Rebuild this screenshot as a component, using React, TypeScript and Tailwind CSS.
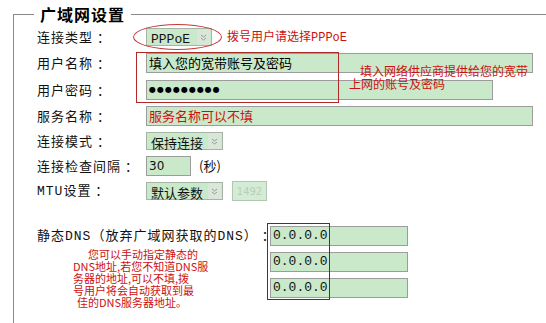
import React from 'react';

const cjk = "font-['Noto_Sans_CJK_SC',sans-serif]";
const mono = "font-['Liberation_Mono','Noto_Sans_CJK_SC',monospace]";

function Arrow() {
  return (
    <span className="flex h-full w-[13px] items-center justify-center bg-[#d9e6d9]">
      <svg width="7" height="7" viewBox="0 0 7 7" fill="none" stroke="#8fa08f" strokeWidth="1">
        <path d="M1 1 L3.5 3 L6 1" />
        <path d="M1 4 L3.5 6 L6 4" />
      </svg>
    </span>
  );
}

function Select({ children, width, className = '' }: { children: React.ReactNode; width: string; className?: string }) {
  return (
    <div className={`flex h-[18px] items-center justify-between border border-[#a5b5a5] bg-[#c9e9ca] pl-[4px] pr-[1px] ${width} ${className}`}>
      <span className="leading-none">{children}</span>
      <Arrow />
    </div>
  );
}

function Label({ children, w = 'w-[109px]' }: { children: React.ReactNode; w?: string }) {
  return <div className={`${w} shrink-0 text-[13px] tracking-[1px] text-[#111] whitespace-nowrap`}>{children}</div>;
}

function Field({ children, width, className = '' }: { children?: React.ReactNode; width: string; className?: string }) {
  return (
    <div className={`flex h-[20px] items-center border border-[#9c9c9c] bg-[#c9e9ca] pl-[2px] ${width} ${className}`}>
      {children}
    </div>
  );
}

export default function App() {
  return (
    <div className={`relative h-[323px] w-[546px] overflow-hidden bg-white pt-[4px] ${cjk}`}>
      <fieldset className="ml-[13px] w-[600px] border-t border-l border-b border-[#8a8a8a] border-r-0">
        <legend className="ml-[20px] h-[20px] px-[6px] text-[16px] font-bold leading-[20px] tracking-[1px] text-black">
          广域网设置
        </legend>

        <div className="pl-[23px] pb-[19px]">
          {/* 连接类型 */}
          <div className="flex h-[26px] items-center">
            <Label>连接类型 ：</Label>
            <div className="relative">
              <Select width="w-[66px]">
                <span className={`${mono} text-[13px] text-[#111]`}>PPPoE</span>
              </Select>
              <div className="absolute -left-[13px] -right-[10px] -top-[4px] -bottom-[4px] rounded-[50%] border border-[#c23a3a]" />
            </div>
            <span className="ml-[15px] text-[12px] text-[#cc1010]">
              拨号用户请选择<span className={mono}>PPPoE</span>
            </span>
          </div>

          {/* 用户名称 / 用户密码 */}
          <div className="relative">
            <div className="flex h-[26px] items-center">
              <Label>用户名称 ：</Label>
              <Field width="w-[387px]">
                <span className="text-[13px] text-black">填入您的宽带账号及密码</span>
              </Field>
            </div>
            <div className="flex h-[28px] items-center">
              <Label>用户密码 ：</Label>
              <Field width="w-[347px]">
                <span className="font-['DejaVu_Sans'] text-[8px] tracking-[1px] text-black">●●●●●●●●●</span>
              </Field>
            </div>
            <div className="absolute left-[99px] top-[2px] h-[51px] w-[203px] border border-[#b02a2a]" />
            <div className="absolute left-[312px] top-[14px] text-[12px] leading-[13px] text-[#cc1010]">
              <div className="pl-[11px]">填入网络供应商提供给您的宽带</div>
              <div>上网的账号及密码</div>
            </div>
          </div>

          {/* 服务名称 */}
          <div className="flex h-[24px] items-center">
            <Label>服务名称 ：</Label>
            <Field width="w-[387px]">
              <span className="text-[13px] text-[#cc1010]">服务名称可以不填</span>
            </Field>
          </div>

          {/* 连接模式 */}
          <div className="flex h-[26px] items-center">
            <Label>连接模式 ：</Label>
            <Select width="w-[77px]">
              <span className="text-[13px] text-[#111]">保持连接</span>
            </Select>
          </div>

          {/* 连接检查间隔 */}
          <div className="flex h-[24px] items-center">
            <Label>连接检查间隔 ：</Label>
            <Field width="w-[45px]">
              <span className="font-['DejaVu_Sans'] text-[12px] text-[#111]">30</span>
            </Field>
            <span className="ml-[8px] text-[13px] text-[#111]">(秒)</span>
          </div>

          {/* MTU设置 */}
          <div className="flex h-[26px] items-center">
            <Label>
              <span className={mono}>MTU</span>设置 ：
            </Label>
            <Select width="w-[77px]">
              <span className="text-[13px] text-[#111]">默认参数</span>
            </Select>
            <div className="ml-[9px] flex h-[20px] w-[35px] items-center justify-center border border-[#b5c5b5] bg-[#d3ecd4]">
              <span className="font-['DejaVu_Sans'] text-[10px] text-[#b9cdb9]">1492</span>
            </div>
          </div>

          {/* 静态DNS */}
          <div className="mt-[22px] flex">
            <div className="w-[233px] shrink-0">
              <div className="flex h-[20px] items-center">
                <Label w="w-auto">
                  静态<span className={mono}>DNS</span>（放弃广域网获取的<span className={mono}>DNS</span>） ：
                </Label>
              </div>
              <div className="mt-[2px] pl-[36px] text-[11px] leading-[12px] text-[#cc1010]">
                <div className="pl-[15px]">您可以手动指定静态的</div>
                <div>DNS地址,若您不知道DNS服</div>
                <div>务器的地址,可以不填,拨</div>
                <div>号用户将会自动获取到最</div>
                <div className="pl-[4px]">佳的DNS服务器地址。</div>
              </div>
            </div>
            <div className="relative flex flex-col gap-[6px]">
              {[0, 1, 2].map((i) => (
                <Field key={i} width="w-[138px]">
                  <span className={`${mono} text-[13px] text-[#111]`}>0.0.0.0</span>
                </Field>
              ))}
              <div className="pointer-events-none absolute left-[-3px] top-[-3px] z-10 h-[77px] w-[63px] border border-solid border-red-700" />
            </div>
          </div>
        </div>
      </fieldset>
    </div>
  );
}
